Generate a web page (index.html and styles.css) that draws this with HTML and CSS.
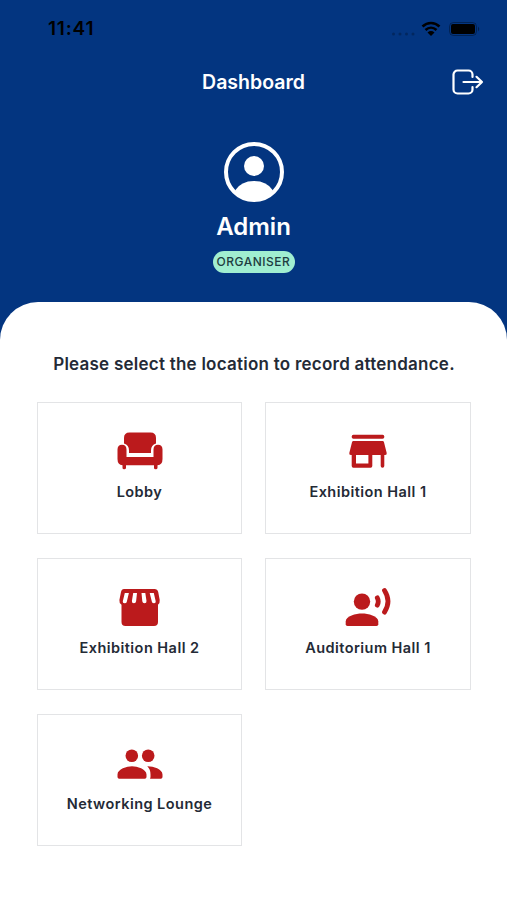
FILE: index.html
```html
<!DOCTYPE html>
<html lang="en">
<head>
    <meta charset="UTF-8">
    <meta name="viewport" content="width=device-width, initial-scale=1.0">
    <title>Dashboard</title>
    <link rel="stylesheet" href="styles.css">
</head>
<body>
    <header class="header">
        <div class="status-bar">
            <span class="time">11:41</span>
            <div class="status-icons">
                <svg class="signal" width="24" height="4" viewBox="0 0 24 4">
                    <circle cx="2.5" cy="2" r="1.5"/>
                    <circle cx="9" cy="2" r="1.5"/>
                    <circle cx="15.5" cy="2" r="1.5"/>
                    <circle cx="22" cy="2" r="1.5"/>
                </svg>
                <svg class="wifi" width="20" height="16" viewBox="0 0 20 16">
                    <path d="M1.5 5.5C6.5.8 13.500.8 18.500 5.500M4.500 9C7.800 6 12.200 6 15.500 9" fill="none" stroke="#000" stroke-width="2.600"/>
                    <path d="M6.500 11.500q3.500-2.800 7 0L10 15z"/>
                </svg>
                <svg class="battery" width="32" height="14" viewBox="0 0 32 14">
                    <rect x=".5" y=".5" width="27" height="13" rx="4" fill="none" stroke="#000" stroke-opacity=".35"/>
                    <rect x="2" y="2" width="24" height="10" rx="2"/>
                    <path d="M29 4.500q2.500 2.500 0 5z" opacity=".4"/>
                </svg>
            </div>
        </div>
        <div class="title-bar">
            <h1>Dashboard</h1>
            <svg class="logout" width="32" height="26" viewBox="0 0 32 26">
                <path d="M20.500 8V5.500a4 4 0 0 0-4-4h-11a4 4 0 0 0-4 4v15a4 4 0 0 0 4 4h11a4 4 0 0 0 4-4V18M11.500 13H30M24.500 7.800L30 13l-5.500 5.200"/>
            </svg>
        </div>
        <div class="profile">
            <svg class="avatar" width="60" height="60" viewBox="0 0 60 60">
                <circle cx="30" cy="30" r="28" fill="none" stroke="#fff" stroke-width="4"/>
                <circle cx="30" cy="24" r="10" fill="#fff"/>
                <path d="M11 48.500Q17 39 30 39t19 9.500Q41 59 30 59T11 48.500z" fill="#fff"/>
            </svg>
            <h2>Admin</h2>
            <span class="badge">ORGANISER</span>
        </div>
    </header>
    <main class="content">
        <p class="prompt">Please select the location to record attendance.</p>
        <div class="locations">
            <div class="card">
                <svg class="icon" viewBox="0 0 48 44">
                    <path d="M13.500 3.500h21Q40 3.500 40 9v5.500q-5 1.500-5 7V24H13v-2.500q0-5.500-5-7V9q0-5.500 5.500-5.500z"/>
                    <path d="M6 15.800q4.500 0 4.500 4.700V28h27v-7.500q0-4.700 4.500-4.700t4.500 4.700V30q0 6-5 6.200v2.600q0 1.500-1.800 1.500T38 38.800v-2.600H10v2.600q0 1.500-1.800 1.500t-1.700-1.500v-2.600q-5-.2-5-6.200v-9.500q0-4.700 4.500-4.700z"/>
                </svg>
                <span>Lobby</span>
            </div>
            <div class="card">
                <svg class="icon" viewBox="0 0 48 44">
                    <rect x="7.700" y="5.700" width="32.600" height="4" rx="1.700"/>
                    <path fill-rule="evenodd" d="M9.500 12h29q1.200 0 1.500 1.200l2.700 10.800q.4 2-1.500 2h-.9v11q0 1.700-1.800 1.700T36.700 37V26h-8.400v11q0 1.700-1.700 1.700H9.400q-1.700 0-1.700-1.700V26h-.9q-1.900 0-1.500-2L8 13.200Q8.300 12 9.500 12zM12 26v8.500h12.400V26z"/>
                </svg>
                <span>Exhibition Hall 1</span>
            </div>
            <div class="card">
                <svg class="icon" viewBox="1 0 48 44">
                    <path fill-rule="evenodd" d="M9 4h30.500q3 0 3.700 3l1.500 8q.4 3-1.700 4.800V37q0 4-4 4H10.500q-4 0-4-4V19.800Q4 18 4.400 15L6 7q.6-3 3-3zM9.800 8l-2 8.300q-.4 2 1.700 2t2.300-1.600L13.900 8zM18.200 8l-1.300 8q-.2 2.300 2 2.300 2 0 2.200-2L22 8zM26.500 8l.8 8.300q.2 2 2.300 2t1.900-2.300L30.300 8zM34.700 8l2.200 8.700q.3 1.600 2.200 1.600t1.600-2L38.800 8z"/>
                </svg>
                <span>Exhibition Hall 2</span>
            </div>
            <div class="card">
                <svg class="icon" viewBox="0 0 48 44">
                    <circle cx="18" cy="16.600" r="8.200"/>
                    <path d="M1.700 36.500C1.700 31 12 28.500 18 28.500s16.300 2.500 16.300 8v2.700q0 1.800-1.800 1.800h-29q-1.800 0-1.800-1.800z"/>
                    <path d="M33.300 12.800q1.900 3.700 0 7.400M40.500 5.500q7 10.800 0 21.600" fill="none" stroke="#bb1a1c" stroke-width="4.800" stroke-linecap="round"/>
                </svg>
                <span>Auditorium Hall 1</span>
            </div>
            <div class="card">
                <svg class="icon" viewBox="0 0 48 44">
                    <circle cx="15.800" cy="14.700" r="6.300"/>
                    <circle cx="32.200" cy="14.700" r="6.300"/>
                    <path d="M1.500 33.500C1.500 28 11 25.200 16 25.200s14.500 2.800 14.500 8.300V36q0 1.700-1.700 1.700H3.200Q1.500 37.700 1.500 36zM31.300 25.300c5.200-.2 15.200 2.700 15.200 8.200V36q0 1.700-1.700 1.700H34q.5-.8.500-2v-2.200q0-5.200-3.200-8.200z"/>
                </svg>
                <span>Networking Lounge</span>
            </div>
        </div>
    </main>
</body>
</html>
```

FILE: styles.css
```css
* {
    box-sizing: border-box;
}
body {
    margin: 0;
    height: 900px;
    overflow: hidden;
    background-color: #033580;
    color: #242a36;
    font-family: Inter, "Liberation Sans", sans-serif;
    display: flex;
    flex-direction: column;
}
h1, h2, p {
    margin: 0;
}
svg {
    display: block;
}
.header {
    height: 302px;
    color: #fff;
}
.status-bar {
    height: 58px;
    padding: 0 26px 0 48px;
    display: flex;
    align-items: center;
    justify-content: space-between;
}
.time {
    color: #000;
    font-size: 19px;
    font-weight: 600;
    letter-spacing: 0.8px;
    line-height: 24px;
}
.status-icons {
    display: flex;
    align-items: center;
}
.signal {
    opacity: 0.25;
    margin: 10px 6px 0 0;
}
.wifi {
    margin-right: 8px;
}
.title-bar {
    height: 48px;
    padding: 0 23px;
    display: grid;
    grid-template-columns: 1fr auto 1fr;
    align-items: center;
}
.title-bar h1 {
    grid-column: 2;
    font-size: 19.5px;
    font-weight: 600;
    line-height: 24px;
    margin-bottom: 1px;
}
.logout {
    justify-self: end;
    fill: none;
    stroke: #fff;
    stroke-width: 2.2;
    stroke-linecap: round;
    stroke-linejoin: round;
}
.profile {
    padding-top: 36px;
    display: flex;
    flex-direction: column;
    align-items: center;
}
.profile h2 {
    margin-top: 10px;
    font-size: 24px;
    font-weight: 600;
    line-height: 30px;
}
.badge {
    margin-top: 9px;
    width: 82px;
    height: 22px;
    border-radius: 11px;
    background-color: #a0eed0;
    color: #1d3c40;
    font-size: 12px;
    font-weight: 500;
    letter-spacing: 0.5px;
    line-height: 22px;
    text-align: center;
}
.content {
    flex: 1;
    background-color: #fff;
    border-radius: 38px 38px 0 0;
    padding: 50px 36px 0 37px;
}
.prompt {
    font-size: 17px;
    font-weight: 600;
    letter-spacing: 0.24px;
    line-height: 24px;
    text-align: center;
    white-space: nowrap;
}
.locations {
    margin-top: 26px;
    display: grid;
    grid-template-columns: 205px 206px;
    justify-content: space-between;
    row-gap: 24px;
}
.card {
    height: 132px;
    border: 1px solid #e3e4e6;
    padding-top: 26px;
    display: flex;
    flex-direction: column;
    align-items: center;
    font-size: 14.5px;
    font-weight: 600;
    letter-spacing: 0.46px;
    line-height: 20px;
}
.icon {
    width: 48px;
    height: 44px;
    margin-bottom: 9px;
    fill: #bb1a1c;
}
```
